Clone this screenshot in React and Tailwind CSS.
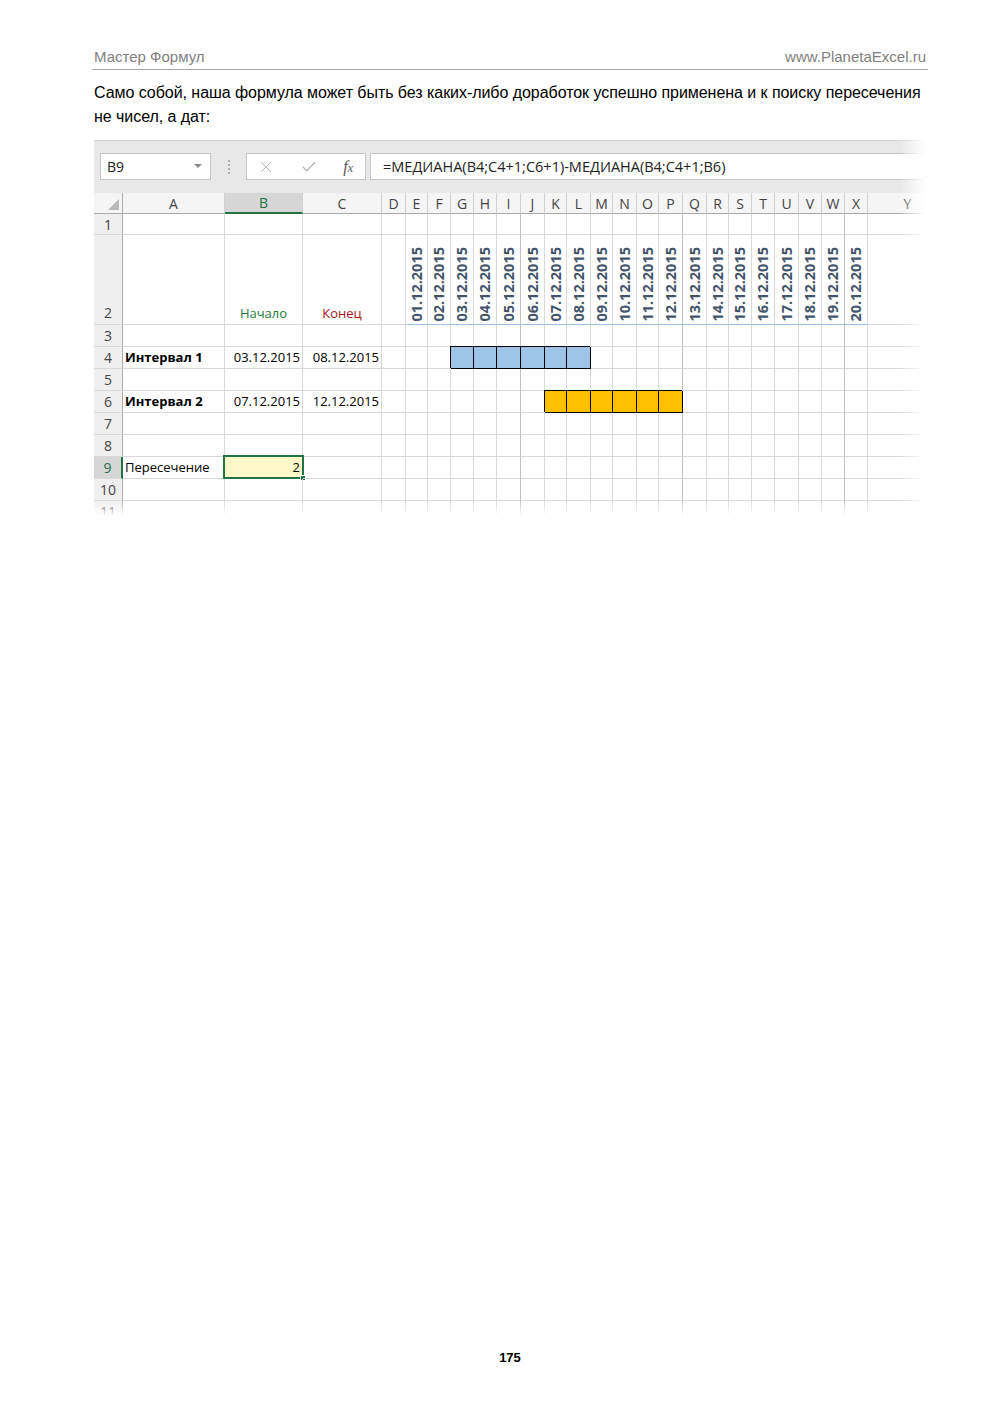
import React from "react";
import { X, Check } from "lucide-react";

const cols = [
  { k: "A", w: "w-[102px]" },
  { k: "B", w: "w-[78px]" },
  { k: "C", w: "w-[79px]" },
  { k: "D", w: "w-[24px]" },
  { k: "E", w: "w-[22px]", d: "01.12.2015" },
  { k: "F", w: "w-[23px]", d: "02.12.2015" },
  { k: "G", w: "w-[23px]", d: "03.12.2015" },
  { k: "H", w: "w-[23px]", d: "04.12.2015" },
  { k: "I", w: "w-[24px]", d: "05.12.2015", dark: true },
  { k: "J", w: "w-[24px]", d: "06.12.2015" },
  { k: "K", w: "w-[22px]", d: "07.12.2015" },
  { k: "L", w: "w-[24px]", d: "08.12.2015" },
  { k: "M", w: "w-[22px]", d: "09.12.2015" },
  { k: "N", w: "w-[24px]", d: "10.12.2015" },
  { k: "O", w: "w-[22px]", d: "11.12.2015" },
  { k: "P", w: "w-[24px]", d: "12.12.2015", dark: true },
  { k: "Q", w: "w-[24px]", d: "13.12.2015" },
  { k: "R", w: "w-[22px]", d: "14.12.2015" },
  { k: "S", w: "w-[23px]", d: "15.12.2015" },
  { k: "T", w: "w-[23px]", d: "16.12.2015" },
  { k: "U", w: "w-[24px]", d: "17.12.2015" },
  { k: "V", w: "w-[23px]", d: "18.12.2015" },
  { k: "W", w: "w-[23px]", d: "19.12.2015", dark: true },
  { k: "X", w: "w-[23px]", d: "20.12.2015" },
  { k: "Y", w: "w-[80px]" },
];

const blue = ["G", "H", "I", "J", "K", "L"];
const orange = ["K", "L", "M", "N", "O", "P"];

const rows = [
  { n: "1", h: "h-[21px]" },
  { n: "2", h: "h-[90px]", tall: true },
  { n: "3", h: "h-[22px]" },
  { n: "4", h: "h-[22px]", a: "Интервал 1", b: "03.12.2015", c: "08.12.2015", bar: blue, barColor: "bg-[#9dc3e6]" },
  { n: "5", h: "h-[22px]" },
  { n: "6", h: "h-[22px]", a: "Интервал 2", b: "07.12.2015", c: "12.12.2015", bar: orange, barColor: "bg-[#ffc000]" },
  { n: "7", h: "h-[22px]" },
  { n: "8", h: "h-[22px]" },
  { n: "9", h: "h-[22px]", a: "Пересечение", b: "2", sel: true },
  { n: "10", h: "h-[22px]" },
  { n: "11", h: "h-[22px]" },
];

const Row = ({ row }) => {
  return (
    <div className={`flex ${row.h}`}>
      {/* row header */}
      <div
        className={`w-[29px] shrink-0 flex justify-center text-[14px] border-b border-[#d9d9d9] ${
          row.tall ? "items-end pb-[1px]" : "items-center"
        } ${
          row.sel
            ? "bg-[#d6d6d6] text-[#217346] border-r-2 border-r-[#217346]"
            : "bg-[#f0f0f0] text-[#444] border-r border-r-[#ababab]"
        }`}
      >
        {row.n}
      </div>
      {cols.map((c) => {
        const inBar = row.bar && row.bar.includes(c.k);
        const isDate = row.tall && c.d;
        return (
          <div
            key={c.k}
            className={`${c.w} shrink-0 relative flex border-r border-b ${
              c.dark ? "border-r-[#c2c2c2]" : "border-r-[#d9d9d9]"
            } ${isDate ? "border-b-[#9bc2e6]" : "border-b-[#d9d9d9]"} ${
              inBar ? `${row.barColor} border-r-black border-b-black shadow-[-1px_-1px_0_0_#000]` : ""
            } ${row.sel && c.k === "B" ? "bg-[#fff9c8]" : ""} ${
              row.tall ? "items-end" : "items-center"
            }`}
          >
            {c.k === "A" && row.a && (
              <span className={`pl-[2px] ${row.sel ? "" : "font-bold"} text-black`}>{row.a}</span>
            )}
            {c.k === "B" && row.b && (
              <span className="ml-auto pr-[2px] text-black">{row.b}</span>
            )}
            {c.k === "C" && row.c && (
              <span className="ml-auto pr-[2px] text-black">{row.c}</span>
            )}
            {row.tall && c.k === "B" && (
              <span className="w-full text-center text-[#1e7b34] pb-[1px]">Начало</span>
            )}
            {row.tall && c.k === "C" && (
              <span className="w-full text-center text-[#a5141a] pb-[1px]">Конец</span>
            )}
            {isDate && (
              <span className="w-full flex justify-center pb-[2px]">
                <span className="[writing-mode:vertical-rl] rotate-180 font-bold text-[14.5px] leading-[20px] text-[#44546a]">
                  {c.d}
                </span>
              </span>
            )}
            {row.sel && c.k === "B" && (
              <div className="absolute -left-[2px] -top-[2px] -right-[2px] -bottom-[1px] border-2 border-[#217346]">
                <div className="absolute -right-[4px] -bottom-[4px] w-[6px] h-[6px] bg-[#217346] border border-white" />
              </div>
            )}
          </div>
        );
      })}
    </div>
  );
};

const App = () => {
  return (
    <div className="w-[992px] h-[1403px] bg-white flex flex-col font-['Liberation_Sans',sans-serif] text-black">
      <div className="pl-[92px] pr-[64px] pt-[47px]">
        {/* Header */}
        <div className="flex justify-between items-end border-b border-[#a6a6a6] pb-[2px] px-[2px] text-[15px] leading-[20px] text-[#7f7f7f]">
          <span>Мастер Формул</span>
          <span>www.PlanetaExcel.ru</span>
        </div>

        {/* Paragraph */}
        <p className="mt-[11px] px-[2px] text-[16px] leading-[24px] tracking-[-0.05px]">
          <span className="block whitespace-nowrap">
            Само собой, наша формула может быть без каких-либо доработок успешно применена и к поиску пересечения
          </span>
          <span className="block">не чисел, а дат:</span>
        </p>

        {/* Screenshot */}
        <div className="mt-[11px] ml-[2px] w-[831px] h-[376px] relative overflow-hidden font-['Open_Sans',sans-serif] text-[13px]">
          {/* Formula bar */}
          <div className="h-[53px] bg-[#e8e8e8] border-t border-[#d4d4d4] flex items-start pt-[12px] pl-[6px]">
            <div className="w-[111px] h-[27px] bg-white border border-[#c6c6c6] flex items-center pl-[6px] pr-[8px] text-[14px] text-[#222]">
              <span>B9</span>
              <svg className="ml-auto" width="8" height="5" viewBox="0 0 8 5">
                <polygon points="0,0 8,0 4,4" fill="#8a8a8a" />
              </svg>
            </div>
            <div className="w-[35px] h-[27px] flex flex-col items-center justify-center gap-[2px]">
              <div className="w-[2px] h-[2px] bg-[#b0b0b0]" />
              <div className="w-[2px] h-[2px] bg-[#b0b0b0]" />
              <div className="w-[2px] h-[2px] bg-[#b0b0b0]" />
              <div className="w-[2px] h-[2px] bg-[#b0b0b0]" />
            </div>
            <div className="w-[120px] h-[27px] bg-white border border-[#c6c6c6] flex items-center justify-between pl-[10px] pr-[12px]">
              <X size={18} strokeWidth={1.3} className="text-[#b4b4b4]" />
              <Check size={18} strokeWidth={1.6} className="text-[#b4b4b4]" />
              <span className="font-['Liberation_Serif',serif] italic text-[16px] text-[#555]">
                f<span className="text-[12px]">x</span>
              </span>
            </div>
            <div className="ml-[4px] flex-1 h-[27px] bg-white border border-[#c6c6c6] flex items-center pl-[12px] text-[14.5px] text-[#222]">
              =МЕДИАНА(B4;C4+1;C6+1)-МЕДИАНА(B4;C4+1;B6)
            </div>
          </div>

          {/* Column headers */}
          <div className="flex h-[21px] bg-[#f5f5f5] text-[#444] text-[14px]">
            <div className="w-[29px] shrink-0 border-r border-b border-[#ababab] flex items-end justify-end p-[3px]">
              <svg width="11" height="11" viewBox="0 0 11 11">
                <polygon points="11,0 11,11 0,11" fill="#b9b9b9" />
              </svg>
            </div>
            {cols.map((c) => (
              <div
                key={c.k}
                className={`${c.w} shrink-0 flex items-center justify-center border-r border-[#d0d0d0] ${
                  c.k === "B"
                    ? "bg-[#d6d6d6] text-[#217346] border-b-2 border-b-[#217346]"
                    : "border-b border-b-[#ababab]"
                }`}
              >
                {c.k}
              </div>
            ))}
          </div>

          {/* Grid rows */}
          {rows.map((r) => (
            <Row key={r.n} row={r} />
          ))}

          {/* Edge fades */}
          <div className="absolute right-0 top-0 h-full w-[26px] bg-linear-to-r from-white/0 to-white" />
          <div className="absolute left-0 bottom-0 w-full h-[16px] bg-linear-to-b from-white/0 to-white" />
        </div>
      </div>

      {/* Page number */}
      <div className="mt-auto pb-[36px] pl-[92px] pr-[64px] text-center text-[13px] leading-[18px] font-bold">
        175
      </div>
    </div>
  );
};

export default App;
